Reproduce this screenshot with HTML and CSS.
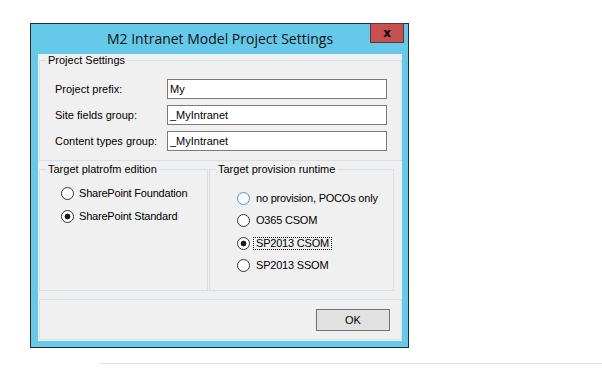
FILE: index.html
```html
<!DOCTYPE html>
<html lang="en">
<head>
  <meta charset="UTF-8" />
  <title>M2 Intranet Model Project Settings</title>
  <link rel="stylesheet" href="styles.css">
</head>
<body>
  <div class="window">
    <div class="titlebar">
      <span class="title">M2 Intranet Model Project Settings</span>
      <button class="close">x</button>
    </div>

    <div class="client">
      <fieldset class="group project">
        <legend>Project Settings</legend>
        <div class="group-body">
          <div class="field">
            <label for="prefix">Project prefix:</label>
            <input type="text" id="prefix" value="My" />
          </div>
          <div class="field">
            <label for="fields">Site fields group:</label>
            <input type="text" id="fields" value="_MyIntranet" />
          </div>
          <div class="field">
            <label for="ctypes">Content types group:</label>
            <input type="text" id="ctypes" value="_MyIntranet" />
          </div>
        </div>
      </fieldset>

      <div class="targets">
        <fieldset class="group edition">
          <legend>Target platrofm edition</legend>
          <div class="group-body">
            <label class="radio-row">
              <input type="radio" class="radio" name="edition" />
              <span class="text">SharePoint Foundation</span>
            </label>
            <label class="radio-row">
              <input type="radio" class="radio" name="edition" checked />
              <span class="text">SharePoint Standard</span>
            </label>
          </div>
        </fieldset>

        <fieldset class="group runtime">
          <legend>Target provision runtime</legend>
          <div class="group-body">
            <label class="radio-row">
              <input type="radio" class="radio hover" name="runtime" />
              <span class="text">no provision, POCOs only</span>
            </label>
            <label class="radio-row">
              <input type="radio" class="radio" name="runtime" />
              <span class="text">O365 CSOM</span>
            </label>
            <label class="radio-row">
              <input type="radio" class="radio" name="runtime" checked />
              <span class="text focus">SP2013 CSOM</span>
            </label>
            <label class="radio-row">
              <input type="radio" class="radio" name="runtime" />
              <span class="text">SP2013 SSOM</span>
            </label>
          </div>
        </fieldset>
      </div>

      <div class="actions">
        <button class="ok">OK</button>
      </div>
    </div>
  </div>

  <div class="rule"></div>
</body>
</html>
```

FILE: styles.css
```css
* {
  margin: 0;
  padding: 0;
  box-sizing: border-box;
}

body {
  background: #fff;
  font-family: "Liberation Sans", Arial, sans-serif;
  font-size: 11px;
  color: #000;
}

.window {
  position: relative;
  width: 379px;
  margin: 23px 0 0 30px;
  padding: 0 6px 6px 7px;
  background: #66c9e9;
  border: 1px solid #2b2b2b;
}

.titlebar {
  height: 29px;
  display: flex;
  align-items: center;
  justify-content: center;
}

.title {
  font-family: "Open Sans", sans-serif;
  font-size: 14px;
  color: #111;
}

/* close button sits over the frame edge */
.close {
  position: absolute;
  top: -1px;
  right: 4px;
  width: 34px;
  height: 20px;
  background: #c75050;
  border: 1px solid #5e3434;
  color: #000;
  font: bold 12px "DejaVu Sans", sans-serif;
  line-height: 16px;
}

.client {
  height: 287px;
  padding-left: 1px;
  background: #f0f0f0;
}

.group {
  border: 1px solid #d8e0e6;
}

.group legend {
  margin-left: 6px;
  padding: 0 2px;
  line-height: 13px;
}

.project {
  margin-top: 1px;
}

.project .group-body {
  display: flex;
  flex-direction: column;
  gap: 6px;
  padding: 12px 14px 9px 15px;
}

.field {
  display: flex;
  align-items: center;
  height: 20px;
}

.field label {
  width: 112px;
}

.field input {
  width: 220px;
  height: 20px;
  padding: 0 2px;
  border: 1px solid #7a7a7a;
  background: #fff;
  font: inherit;
  color: #000;
}

.targets {
  display: flex;
  gap: 1px;
  margin-top: 2px;
}

.edition {
  width: 169px;
}

.runtime {
  width: 185px;
}

.targets .group-body {
  height: 114px;
}

.edition .group-body {
  padding: 6px 0 0 21px;
}

.runtime .group-body {
  padding: 11px 0 0 27px;
}

.radio-row {
  display: flex;
  align-items: center;
  height: 23px;
}

.runtime .radio-row {
  height: 22.5px;
}

.radio {
  appearance: none;
  -webkit-appearance: none;
  width: 13px;
  height: 13px;
  border: 1px solid #333;
  border-radius: 50%;
  background: #fff;
}

.radio:checked {
  background: radial-gradient(circle, #1a1a1a 0 2.6px, #fff 3.2px);
}

.radio.hover {
  border-color: #3c9ad6;
}

.radio-row .text {
  margin-left: 2px;
  padding: 0 2px;
  border: 1px dotted transparent;
  line-height: 11px;
  letter-spacing: -0.2px;
}

.runtime .radio-row .text {
  margin-left: 3px;
}

.radio-row .text.focus {
  border-color: #000;
}

.actions {
  display: flex;
  justify-content: flex-end;
  height: 41px;
  margin-top: 8px;
  padding: 9px 11px 0 0;
  border: 1px solid #d8e0e6;
}

.ok {
  width: 74px;
  height: 22px;
  background: #e1e1e1;
  border: 1px solid #707070;
  font: inherit;
  color: #000;
}

.rule {
  width: 503px;
  height: 1px;
  margin: 15px 0 0 99px;
  background: #e2e2e2;
}
```
